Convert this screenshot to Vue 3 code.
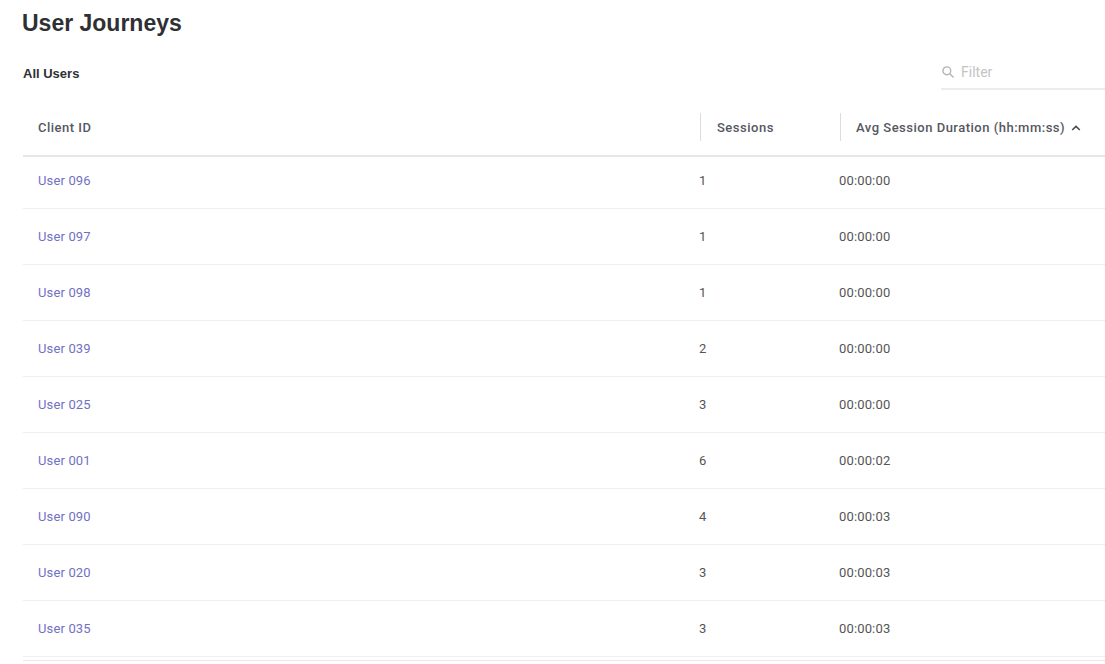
<script setup>
const rows = [
  ['User 096', 1, '00:00:00'],
  ['User 097', 1, '00:00:00'],
  ['User 098', 1, '00:00:00'],
  ['User 039', 2, '00:00:00'],
  ['User 025', 3, '00:00:00'],
  ['User 001', 6, '00:00:02'],
  ['User 090', 4, '00:00:03'],
  ['User 020', 3, '00:00:03'],
  ['User 035', 3, '00:00:03']
]
</script>

<template>
  <div class="page">
    <h1 class="title">User Journeys</h1>
    <div class="toolbar">
      <span class="sub">All Users</span>
      <label class="filter">
        <svg class="search" width="14" height="14" viewBox="0 0 14 14" fill="none" stroke="#b4b4b4" stroke-width="1.4">
          <circle cx="5.8" cy="5.8" r="3.9" />
          <path d="M8.7 8.7 L12.6 12.6" />
        </svg>
        <span class="ph">Filter</span>
      </label>
    </div>
    <div class="thead">
      <div class="th c1">Client ID</div>
      <div class="th c2"><span class="sep"></span>Sessions</div>
      <div class="th c3">
        <span class="sep"></span>Avg Session Duration (hh:mm:ss)
        <svg class="caret" width="10" height="6" viewBox="0 0 10 6" fill="none" stroke="#4a4d55" stroke-width="1.6">
          <path d="M1.2 5 L5 1.4 L8.8 5" />
        </svg>
      </div>
    </div>
    <div v-for="r in rows" :key="r[0]" class="row">
      <a class="client">{{ r[0] }}</a>
      <span class="sessions">{{ r[1] }}</span>
      <span class="dur">{{ r[2] }}</span>
    </div>
    <div class="foot"></div>
  </div>
</template>

<style>
html, body { margin: 0; background: #fff; overflow: hidden; }
</style>

<style scoped>
.page {
  box-sizing: border-box;
  width: 1105px;
  height: 664px;
  padding-left: 23px;
  font-family: Roboto, "Liberation Sans", Arial, sans-serif;
  overflow: hidden;
}
.title {
  margin: 0 0 0 -1px;
  padding-top: 9px;
  font-family: "Liberation Sans", Arial, sans-serif;
  font-size: 23px;
  line-height: 28px;
  font-weight: 700;
  color: #2f3034;
}
.toolbar {
  display: flex;
  justify-content: space-between;
  align-items: flex-start;
  height: 42px;
  margin-top: 20px;
}
.sub {
  margin-top: 9px;
  font-family: "Liberation Sans", Arial, sans-serif;
  font-size: 13px;
  line-height: 16px;
  font-weight: 700;
  color: #2f3034;
}
.filter {
  box-sizing: border-box;
  display: flex;
  align-items: center;
  gap: 6px;
  width: 164px;
  height: 32px;
  border-bottom: 2px solid #ececec;
  padding-bottom: 2px;
  margin-top: 1px;
}
.search { flex: none; }
.ph {
  font-size: 14px;
  color: #c4c4c4;
}
.thead {
  display: flex;
  height: 56px;
  border-bottom: 2px solid #e6e6e6;
  align-items: center;
  margin-bottom: -4px;
}
.th {
  position: relative;
  display: flex;
  align-items: center;
  font-size: 13px;
  font-weight: 500;
  color: #55585f;
  letter-spacing: 0.5px;
}
.c1 { width: 677px; padding-left: 15px; box-sizing: border-box; }
.c2 { width: 140px; padding-left: 17px; box-sizing: border-box; }
.c3 { flex: 1; padding-left: 16px; box-sizing: border-box; }
.sep {
  position: absolute;
  left: 0;
  top: 50%;
  transform: translateY(-50%);
  width: 1px;
  height: 28px;
  background: #dcdcdc;
}
.caret { margin-left: 6px; margin-top: 1px; }
.row {
  display: flex;
  align-items: center;
  height: 55px;
  border-bottom: 1px solid #f0f0f0;
  font-size: 13px;
  letter-spacing: 0.15px;
}
.client { width: 676px; padding-left: 15px; box-sizing: border-box; color: #7270c2; }
.sessions { width: 140px; color: #555; }
.dur { color: #555; }
.foot {
  margin-top: 3px;
  border-top: 1px solid #e8e8e8;
}
</style>
